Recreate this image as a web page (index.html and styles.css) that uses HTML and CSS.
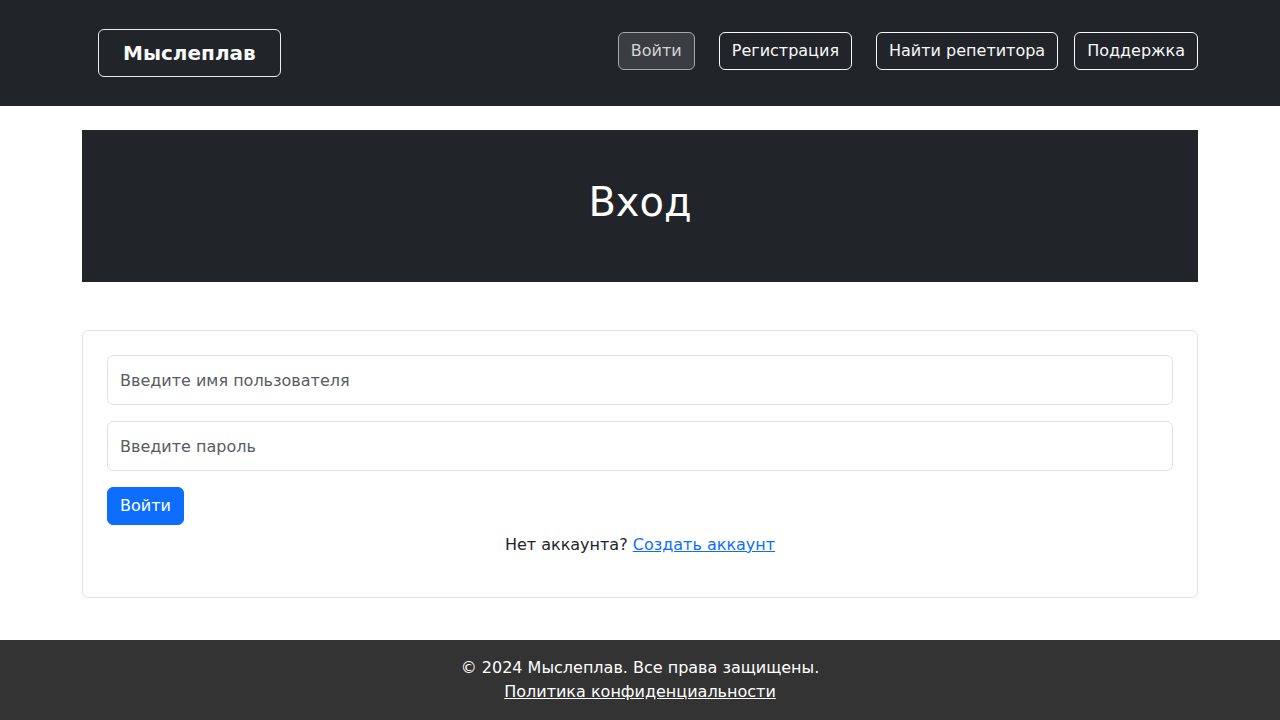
FILE: index.html
```html
<!DOCTYPE html>
<html lang="ru">
<head>
<meta charset="utf-8">
<title>Вход — Мыслеплав</title>
<link rel="stylesheet" href="styles.css">
</head>
<body>
<header class="site-header">
  <div class="container header-inner">
    <a class="brand" href="#">Мыслеплав</a>
    <nav class="nav">
      <a class="nav-btn active" href="#">Войти</a>
      <a class="nav-btn ml-24" href="#">Регистрация</a>
      <a class="nav-btn ml-24" href="#">Найти репетитора</a>
      <a class="nav-btn ml-16" href="#">Поддержка</a>
    </nav>
  </div>
</header>
<main class="container main">
  <section class="hero">
    <h1 class="hero-title">Вход</h1>
  </section>
  <section class="card">
    <form class="login-form">
      <input class="field" type="text" placeholder="Введите имя пользователя">
      <input class="field" type="password" placeholder="Введите пароль">
      <div><button class="btn-primary" type="button">Войти</button></div>
    </form>
    <p class="signup">Нет аккаунта? <a href="#">Создать аккаунт</a></p>
  </section>
</main>
<footer class="site-footer">
  <p class="footer-line">© 2024 Мыслеплав. Все права защищены.</p>
  <a class="footer-link" href="#">Политика конфиденциальности</a>
</footer>
</body>
</html>
```
FILE: styles.css
```css
* { box-sizing: border-box; }
html, body { margin: 0; padding: 0; }
body {
  font-family: "DejaVu Sans", sans-serif;
  font-size: 16px;
  line-height: 24px;
  color: #212529;
  background: #fff;
}
.container {
  width: 1140px;
  margin: 0 auto;
  padding: 0 12px;
}
.site-header {
  background: #212529;
  height: 106px;
}
.header-inner {
  height: 106px;
  display: flex;
  align-items: center;
  justify-content: space-between;
}
.brand {
  margin-left: 16px;
  display: inline-block;
  padding: 8px 24px;
  border: 1px solid #e9ecef;
  border-radius: 6px;
  color: #f8f9fa;
  font-weight: bold;
  font-size: 20px;
  line-height: 30px;
  text-decoration: none;
}
.nav { display: flex; align-items: center; margin-bottom: 4px; }
.nav-btn {
  display: inline-block;
  padding: 6px 12px;
  border: 1px solid #f8f9fa;
  border-radius: 6px;
  color: #f8f9fa;
  text-decoration: none;
  font-size: 16px;
  line-height: 24px;
}
.nav-btn.active {
  background: #3a3d42;
  color: #d3d4d6;
  border-color: #a6a8ab;
}
.ml-24 { margin-left: 24px; }
.ml-16 { margin-left: 16px; }
.main { padding-top: 24px; padding-bottom: 42px; }
.hero {
  background: #212529;
  height: 152px;
  display: flex;
  align-items: center;
  justify-content: center;
  padding-bottom: 8px;
}
.hero-title {
  margin: 0;
  color: #fff;
  font-size: 40px;
  font-weight: normal;
  line-height: 48px;
}
.card {
  margin-top: 48px;
  border: 1px solid #dee2e6;
  border-radius: 6px;
  padding: 24px;
}
.login-form { display: flex; flex-direction: column; gap: 16px; }
.field {
  width: 100%;
  height: 50px;
  padding: 12px;
  border: 1px solid #dee2e6;
  border-radius: 6px;
  font-family: inherit;
  font-size: 16px;
  line-height: 24px;
  color: #212529;
  background: #fff;
}
.field::placeholder { color: #595c5f; }
.btn-primary {
  height: 38px;
  padding: 6px 12px;
  background: #0d6efd;
  border: 1px solid #0d6efd;
  border-radius: 6px;
  color: #fff;
  font-family: inherit;
  font-size: 16px;
  line-height: 24px;
}
.signup {
  margin: 8px 0 16px;
  text-align: center;
}
.signup a { color: #0d6efd; }
.site-footer {
  background: #333;
  color: #fff;
  text-align: center;
  padding: 16px 0;
}
.footer-line { margin: 0; }
.footer-link { color: #fff; }
```
